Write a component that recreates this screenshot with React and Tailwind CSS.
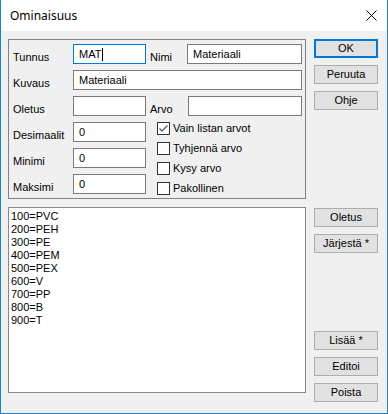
import React from "react";

const F = { fontFamily: '"Liberation Sans", Arial, sans-serif' };

function Btn({ children, primary }) {
  return (
    <div
      className={
        "h-[19px] w-[64px] flex items-center justify-center text-[11px] leading-[13px] text-black bg-[#e1e1e1] " +
        (primary ? "border-2 border-[#0078d7]" : "border border-[#adadad]")
      }
    >
      {children}
    </div>
  );
}

function Field({ w, children, focused }) {
  return (
    <div
      className={
        "h-[20px] bg-white flex items-center pl-[5px] text-[11px] leading-[13px] text-black " +
        (focused ? "border border-[#0078d7]" : "border border-[#7a7a7a]")
      }
      style={{ width: w }}
    >
      {children}
    </div>
  );
}

function Label({ children, w }) {
  return (
    <div className="mt-[7px] text-[11px] leading-[13px] text-black shrink-0" style={{ width: w }}>
      {children}
    </div>
  );
}

function Check({ checked, children }) {
  return (
    <div className="flex items-center h-[13px]">
      <div className="w-[13px] h-[13px] border border-[#333333] bg-white flex items-center justify-center shrink-0">
        {checked && (
          <svg width="11" height="11" viewBox="0 0 11 11">
            <polyline points="1.5,5.5 4,8 9.5,2.5" fill="none" stroke="#4d4d4d" strokeWidth="1.2" />
          </svg>
        )}
      </div>
      <span className="ml-[3px] text-[11px] leading-[13px] text-black">{children}</span>
    </div>
  );
}

const items = ["100=PVC", "200=PEH", "300=PE", "400=PEM", "500=PEX", "600=V", "700=PP", "800=B", "900=T"];

export default function App() {
  return (
    <div className="w-[388px] h-[414px] border-x border-b border-[#1883d7] flex flex-col bg-[#f0f0f0]" style={F}>
      <div className="h-[31px] bg-white flex items-center justify-between pl-[9px] pr-[10px] shrink-0">
        <span className="text-[12px] text-black" style={{ fontFamily: '"Noto Sans", "Open Sans", sans-serif' }}>
          Ominaisuus
        </span>
        <svg width="11" height="11" viewBox="0 0 11 11">
          <line x1="0.5" y1="0.5" x2="10.5" y2="10.5" stroke="#000" strokeWidth="1" />
          <line x1="10.5" y1="0.5" x2="0.5" y2="10.5" stroke="#000" strokeWidth="1" />
        </svg>
      </div>
      <div className="flex-1 flex flex-col pl-[7px] pt-[8px]">
        <div className="flex gap-[8px]">
          <div className="w-[298px] h-[160px] border border-[#828282] flex flex-col pt-[4px] pl-[4px] gap-[6px]">
            <div className="flex h-[20px]">
              <Label w={60}>Tunnus</Label>
              <Field w={73} focused>
                MAT<span className="inline-block w-px h-[13px] bg-black ml-[1px]" />
              </Field>
              <div className="w-[4px]" />
              <Label w={37}>Nimi</Label>
              <Field w={115}>Materiaali</Field>
            </div>
            <div className="flex h-[20px]">
              <Label w={60}>Kuvaus</Label>
              <Field w={229}>Materiaali</Field>
            </div>
            <div className="flex h-[20px]">
              <Label w={60}>Oletus</Label>
              <Field w={73}></Field>
              <div className="w-[4px]" />
              <Label w={38}>Arvo</Label>
              <Field w={114}></Field>
            </div>
            <div className="flex">
              <div className="flex flex-col gap-[6px]">
                <div className="flex h-[20px]">
                  <Label w={60}>Desimaalit</Label>
                  <Field w={73}>0</Field>
                </div>
                <div className="flex h-[20px]">
                  <Label w={60}>Minimi</Label>
                  <Field w={73}>0</Field>
                </div>
                <div className="flex h-[20px]">
                  <Label w={60}>Maksimi</Label>
                  <Field w={73}>0</Field>
                </div>
              </div>
              <div className="ml-[11px] flex flex-col gap-[7px]">
                <Check checked>Vain listan arvot</Check>
                <Check>Tyhjennä arvo</Check>
                <Check>Kysy arvo</Check>
                <Check>Pakollinen</Check>
              </div>
            </div>
          </div>
          <div className="flex flex-col gap-[7px]">
            <Btn primary>OK</Btn>
            <Btn>Peruuta</Btn>
            <Btn>Ohje</Btn>
          </div>
        </div>
        <div className="flex gap-[8px] mt-[8px] items-start">
          <div className="w-[298px] h-[186px] border border-[#828790] bg-white pt-[2px] pl-[2px] flex flex-col">
            {items.map((t) => (
              <div key={t} className="text-[11px] leading-[13px] text-black">
                {t}
              </div>
            ))}
          </div>
          <div className="h-[195px] pt-[1px] flex flex-col justify-between">
            <div className="flex flex-col gap-[7px]">
              <Btn>Oletus</Btn>
              <Btn>Järjestä *</Btn>
            </div>
            <div className="flex flex-col gap-[7px]">
              <Btn>Lisää *</Btn>
              <Btn>Editoi</Btn>
              <Btn>Poista</Btn>
            </div>
          </div>
        </div>
      </div>
    </div>
  );
}
